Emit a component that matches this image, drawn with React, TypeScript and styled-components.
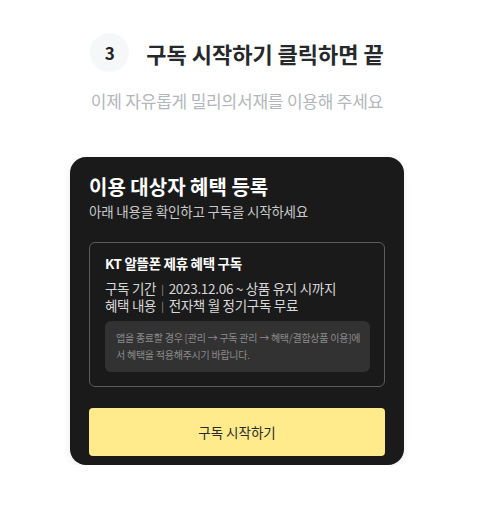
import styled, { createGlobalStyle } from "styled-components";

const GlobalStyle = createGlobalStyle`
  body {
    margin: 0;
    background: #ffffff;
    font-family: "Noto Sans CJK KR", "Noto Sans", sans-serif;
  }
`;

const Page = styled.div`
  width: 474px;
  padding-top: 33px;
  display: flex;
  flex-direction: column;
  align-items: center;
`;

const StepRow = styled.div`
  display: flex;
  align-items: center;
  gap: 17px;
  height: 39px;
`;

const StepBadge = styled.div`
  width: 39px;
  height: 39px;
  border-radius: 50%;
  background: #f6f7f9;
  display: flex;
  align-items: center;
  justify-content: center;
  font-size: 17px;
  font-weight: 700;
  color: #222426;
`;

const StepTitle = styled.h1`
  margin: 0;
  font-size: 22px;
  font-weight: 700;
  color: #26282b;
`;

const Lead = styled.p`
  margin: 18px 0 0;
  font-size: 17px;
  line-height: 22px;
  color: #b3b6bb;
  letter-spacing: -0.2px;
`;

const Card = styled.section`
  margin-top: 45px;
  width: 334px;
  box-sizing: border-box;
  padding: 17px 19px 9px;
  border-radius: 16px;
  background: #1a1a1a;
  box-shadow: 0 2px 8px rgba(0, 0, 0, 0.08);
`;

const CardTitle = styled.h2`
  margin: 0;
  font-size: 20px;
  line-height: 26px;
  font-weight: 700;
  color: #ffffff;
`;

const CardSub = styled.p`
  margin: 2px 0 0;
  font-size: 13.5px;
  line-height: 18px;
  color: #c9c9c9;
  letter-spacing: -0.2px;
`;

const InfoBox = styled.div`
  margin-top: 22px;
  border: 1px solid #5c5c5c;
  border-radius: 6px;
  padding: 11px 14px 14px 15px;
`;

const InfoTitle = styled.h3`
  margin: 0;
  font-size: 13.5px;
  line-height: 18px;
  font-weight: 700;
  color: #ffffff;
  letter-spacing: -0.3px;
`;

const InfoList = styled.div`
  margin-top: 8px;
  display: flex;
  flex-direction: column;
`;

const InfoLine = styled.div`
  display: flex;
  align-items: center;
  height: 17px;
  font-size: 13.5px;
  line-height: 17px;
  color: #d8d8d8;
  letter-spacing: -0.3px;
  white-space: pre;
`;

const Divider = styled.span`
  margin: 0 5px;
  color: #9a9a9a;
  font-size: 10px;
`;

const Notice = styled.div`
  margin-top: 7px;
  background: #323232;
  border-radius: 6px;
  padding: 8px 7px 9px 11px;
  font-size: 10px;
  line-height: 17px;
  color: #8c8c8c;
  letter-spacing: -0.25px;
  word-break: break-all;
`;

const StartButton = styled.button`
  margin-top: 21px;
  width: 100%;
  height: 48px;
  border: none;
  border-radius: 4px;
  background: #ffeb8c;
  font-family: inherit;
  font-size: 13.5px;
  color: #2a2a2a;
  cursor: pointer;
`;

export default function App() {
  return (
    <>
      <GlobalStyle />
      <Page>
        <StepRow>
          <StepBadge>3</StepBadge>
          <StepTitle>구독 시작하기 클릭하면 끝</StepTitle>
        </StepRow>
        <Lead>이제 자유롭게 밀리의서재를 이용해 주세요</Lead>
        <Card>
          <CardTitle>이용 대상자 혜택 등록</CardTitle>
          <CardSub>아래 내용을 확인하고 구독을 시작하세요</CardSub>
          <InfoBox>
            <InfoTitle>KT 알뜰폰 제휴 혜택 구독</InfoTitle>
            <InfoList>
              <InfoLine>
                구독 기간<Divider>|</Divider>2023.12.06 ~ 상품 유지 시까지
              </InfoLine>
              <InfoLine>
                혜택 내용<Divider>|</Divider>전자책 월 정기구독 무료
              </InfoLine>
            </InfoList>
            <Notice>
              앱을 종료할 경우 [관리 → 구독 관리 → 혜택/결합상품 이용]에서
              혜택을 적용해주시기 바랍니다.
            </Notice>
          </InfoBox>
          <StartButton>구독 시작하기</StartButton>
        </Card>
      </Page>
    </>
  );
}
